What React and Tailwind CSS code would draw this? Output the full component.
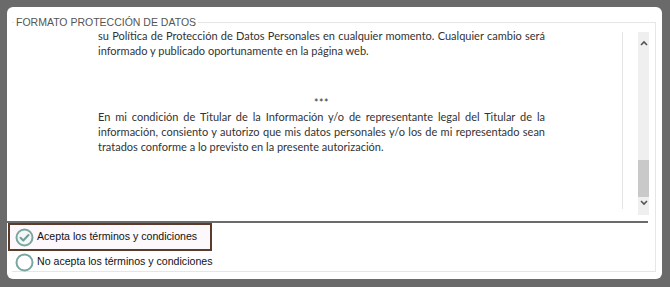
import React from "react";

function Chevron({ up }) {
  return (
    <svg width="8" height="6" viewBox="0 0 8 6" className="block">
      <path
        d={up ? "M1 5 L4 2 L7 5" : "M1 1 L4 4 L7 1"}
        fill="none"
        stroke="#555"
        strokeWidth="1.6"
      />
    </svg>
  );
}

function Radio({ checked }) {
  return (
    <svg width="19" height="19" viewBox="0 0 19 19" className="block shrink-0">
      <circle cx="9.5" cy="9.5" r="8" fill={checked ? "#f3f8f7" : "#ffffff"} stroke="#7aa6a0" strokeWidth="2" />
      {checked && (
        <path d="M5.5 9.8 L8.3 12.5 L13.5 7" fill="none" stroke="#6f9e98" strokeWidth="2" strokeLinecap="round" strokeLinejoin="round" />
      )}
    </svg>
  );
}

export default function App() {
  const body = "font-['Lato','Open_Sans',sans-serif] text-[11px] leading-[15px] text-[#333]";
  const just = "text-justify [text-align-last:left]";
  return (
    <div className="w-[670px] h-[287px] bg-[#6a6a6a] pt-[7px] pl-[7px] pr-[8px] pb-[8px]">
      <div className="w-[655px] h-[272px] bg-white rounded-[6px] pt-[15px] pl-[5px]">
        <div className="relative w-[644px] h-[250px] border-t border-r border-b border-[#e6e6e6]">
          <span className="absolute left-[2px] top-[-8px] bg-white px-[2px] font-['Liberation_Sans',Arial,sans-serif] text-[10.5px] leading-[14px] text-[#555]">
            FORMATO PROTECCIÓN DE DATOS
          </span>
          <div className="flex h-[198px]">
            <div className="w-[610px] overflow-hidden pt-[5px] pl-[86px]">
              <div className={`w-[447px] ${body}`}>
                <p className={just}>
                  su Política de Protección de Datos Personales en cualquier momento. Cualquier cambio será informado y publicado oportunamente en la página web.
                </p>
                <p className="mt-[40px] text-center text-[10.5px] leading-[10px] tracking-[0.5px]">***</p>
                <p className={`mt-[1px] ${just}`}>
                  En mi condición de Titular de la Información y/o de representante legal del Titular de la información, consiento y autorizo que mis datos personales y/o los de mi representado sean tratados conforme a lo previsto en la presente autorización.
                </p>
              </div>
            </div>
            <div className="w-px bg-[#e4e4e4] mt-[9px] h-[177px]" />
            <div className="ml-[15px] w-[11px] mt-[9px] h-[183px] bg-[#efefef] flex flex-col">
              <div className="h-[22px] flex items-center justify-center">
                <Chevron up />
              </div>
              <div className="h-[106px]" />
              <div className="h-[37px] bg-[#c9c9c9]" />
              <div className="pt-[3px] flex justify-center">
                <Chevron />
              </div>
            </div>
          </div>
          <div className="-ml-[5px] w-[641px] h-[2px] bg-[#6b6b6b]" />
          <div className="-ml-[4px] font-['Liberation_Sans',Arial,sans-serif] text-[10.6px] text-[#111] whitespace-nowrap">
            <div className="w-[204px] h-[28px] border-2 border-[#5b3b2b] bg-[#fdf8fb] flex items-center pl-[5px] gap-[3px]">
              <Radio checked />
              <span>Acepta los términos y condiciones</span>
            </div>
            <div className="h-[22px] flex items-center pl-[7px] gap-[3px]">
              <Radio />
              <span>No acepta los términos y condiciones</span>
            </div>
          </div>
        </div>
      </div>
    </div>
  );
}
